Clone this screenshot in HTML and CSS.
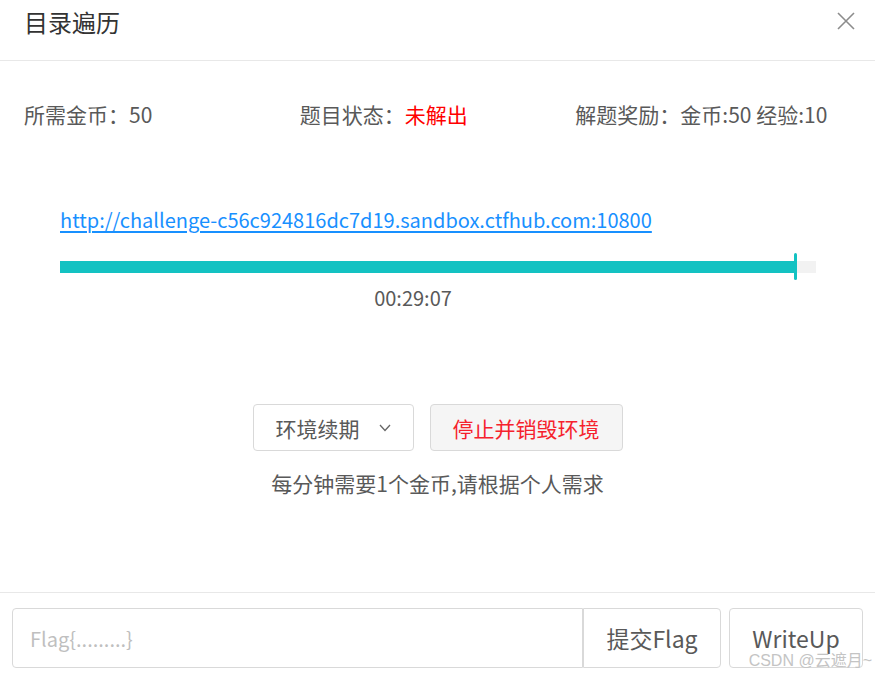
FILE: index.html
```html
<!DOCTYPE html>
<html lang="zh-CN">
<head>
  <meta charset="UTF-8">
  <meta name="viewport" content="width=device-width, initial-scale=1.0">
  <title>目录遍历</title>
  <link rel="stylesheet" href="styles.css">
</head>
<body>
  <div class="modal">
    <div class="modal-header">
      <h2 class="modal-title">目录遍历</h2>
      <button class="close-btn" aria-label="关闭">
        <svg width="18" height="18" viewBox="0 0 18 18">
          <path d="M1 1 L17 17 M17 1 L1 17" stroke="#8c8c8c" stroke-width="1.6" fill="none"/>
        </svg>
      </button>
    </div>

    <div class="modal-body">
      <div class="info-row">
        <div class="info-item">所需金币：50</div>
        <div class="info-item">题目状态：<span class="status-red">未解出</span></div>
        <div class="info-item">解题奖励：金币:50 经验:10</div>
      </div>

      <div class="env">
        <a class="env-link" href="#">http://challenge-c56c924816dc7d19.sandbox.ctfhub.com:10800</a>
        <div class="progress">
          <div class="progress-fill" style="width: 97.1%"></div>
          <span class="progress-marker" style="left: 97.1%"></span>
        </div>
        <div class="progress-time">00:29:07</div>
      </div>

      <div class="actions">
        <button class="btn btn-renew">环境续期
          <svg width="12" height="8" viewBox="0 0 12 8"><path d="M1 1 L6 6.5 L11 1" stroke="#666" stroke-width="1.3" fill="none"/></svg>
        </button>
        <button class="btn btn-danger">停止并销毁环境</button>
      </div>
      <p class="hint">每分钟需要1个金币,请根据个人需求</p>
    </div>

    <div class="modal-footer">
      <div class="flag-group">
        <input class="flag-input" type="text" placeholder="Flag{.........}">
        <button class="btn btn-submit">提交Flag</button>
      </div>
      <button class="btn btn-writeup">WriteUp</button>
    </div>
  </div>

  <div class="watermark">CSDN @云遮月~</div>
</body>
</html>
```

FILE: styles.css
```css
* {
  margin: 0;
  padding: 0;
  box-sizing: border-box;
}

body {
  font-family: "Noto Sans CJK SC", "Open Sans", sans-serif;
  background: #fff;
  color: #595959;
  width: 875px;
  height: 676px;
  overflow: hidden;
  position: relative;
}

.modal {
  display: flex;
  flex-direction: column;
  height: 100%;
}

.modal-header {
  height: 61px;
  border-bottom: 1px solid #e8e8e8;
  display: flex;
  justify-content: space-between;
  align-items: flex-start;
  padding: 5px 20px 0 24px;
}

.modal-title {
  font-size: 24px;
  font-weight: 400;
  color: #333;
  line-height: 34px;
}

.close-btn {
  background: none;
  border: none;
  margin-top: 7px;
  cursor: pointer;
}

.modal-body {
  flex: 1;
  padding: 38px 24px 0;
}

.info-row {
  display: grid;
  grid-template-columns: repeat(3, 1fr);
  font-size: 21px;
  line-height: 30px;
  color: #595959;
}

.status-red {
  color: #ff0000;
}

.env {
  padding: 76px 35px 0 36px;
}

.env-link {
  display: inline-block;
  font-size: 20px;
  line-height: 30px;
  color: #1890ff;
  text-decoration: underline;
  text-underline-offset: 3px;
}

.progress {
  position: relative;
  height: 12px;
  margin-top: 26px;
  background: #f2f2f2;
}

.progress-fill {
  height: 100%;
  background: #13c2c2;
}

.progress-marker {
  position: absolute;
  top: -8px;
  width: 3px;
  height: 27px;
  border-radius: 2px;
  background: #13c2c2;
}

.progress-time {
  margin-top: 10px;
  text-align: center;
  padding-right: 50px;
  font-size: 20px;
  line-height: 30px;
  color: #595959;
}

.actions {
  display: flex;
  justify-content: center;
  gap: 16px;
  margin-top: 91px;
}

.btn {
  font-family: inherit;
  background: #fff;
  border: 1px solid #d9d9d9;
  border-radius: 4px;
  cursor: pointer;
}

.actions .btn {
  height: 47px;
  font-size: 21px;
  padding: 0 22px;
}

.btn-renew {
  display: flex;
  align-items: center;
  gap: 19px;
  color: #595959;
}

.btn-danger {
  background: #f5f5f5;
  color: #f5222d;
}

.hint {
  text-align: center;
  margin-top: 17px;
  font-size: 21px;
  line-height: 30px;
  color: #595959;
}

.modal-footer {
  border-top: 1px solid #e8e8e8;
  padding: 15px 12px 8px;
  display: flex;
  gap: 8px;
}

.flag-group {
  flex: 1;
  display: flex;
}

.flag-input {
  flex: 1;
  height: 60px;
  border: 1px solid #d9d9d9;
  border-radius: 4px 0 0 4px;
  padding: 0 17px;
  font-family: inherit;
  font-size: 20px;
  color: #595959;
  outline: none;
}

.flag-input::placeholder {
  color: #bfbfbf;
}

.btn-submit {
  width: 138px;
  height: 60px;
  font-size: 23px;
  color: #595959;
  border-radius: 0 4px 4px 0;
}

.btn-writeup {
  width: 134px;
  height: 60px;
  font-size: 23px;
  color: #595959;
}

.watermark {
  position: absolute;
  right: 3px;
  bottom: 5px;
  font-family: "Liberation Sans", "Noto Sans CJK SC", sans-serif;
  font-size: 16px;
  color: #c4c4c4;
}
```
